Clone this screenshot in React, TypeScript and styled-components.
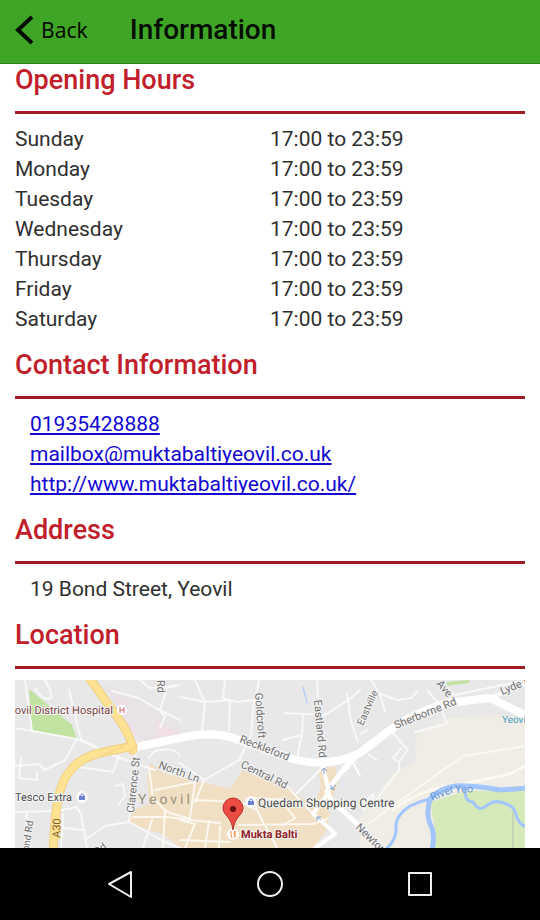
import React from "react";
import styled, { createGlobalStyle } from "styled-components";

const GlobalStyle = createGlobalStyle`
  * { box-sizing: border-box; }
  body {
    margin: 0;
    background: #fff;
    color: #2f2f2f;
    font-family: Roboto, "Liberation Sans", sans-serif;
    font-size: 21px;
    line-height: 30px;
  }
`;

const Screen = styled.div`
  display: flex;
  flex-direction: column;
  height: 100vh;
`;

const TopBar = styled.header`
  display: flex;
  align-items: center;
  flex: none;
  gap: 42px;
  height: 64px;
  padding: 0 15px 4px;
  background: #3fa526;
  border-bottom: 1px solid #2d821b;
  color: #050d03;
`;

const BackButton = styled.button`
  display: flex;
  align-items: center;
  gap: 8px;
  padding: 0;
  border: 0;
  background: none;
  color: inherit;
  font-family: "Noto Sans", sans-serif;
  font-size: 21px;
  line-height: 30px;
  cursor: pointer;
`;

const PageTitle = styled.h1`
  margin: 0;
  font-size: 28px;
  font-weight: 500;
  line-height: 32px;
`;

const Content = styled.main`
  display: flex;
  flex-direction: column;
  flex: 1;
  min-height: 0;
  padding: 0 15px;
  overflow: hidden;
`;

const Section = styled.section<{ $fill?: boolean }>`
  flex: ${(p) => (p.$fill ? "1 0 0" : "none")};
  display: flex;
  flex-direction: column;
  min-height: 0;
`;

const SectionTitle = styled.h2<{ $first?: boolean }>`
  margin: 0 0 10px;
  padding: ${(p) => (p.$first ? "0" : "15px")} 0 15px;
  border-bottom: 3px solid #a01c22;
  color: #c1202b;
  font-size: 27px;
  font-weight: 500;
  line-height: 32px;
`;

const HoursTable = styled.table`
  width: 100%;
  table-layout: fixed;
  border-collapse: collapse;
`;

const DayCell = styled.th`
  padding: 0;
  font-weight: 400;
  text-align: left;
`;

const TimeCell = styled.td`
  padding: 0;
`;

const Details = styled.div`
  display: flex;
  flex-direction: column;
  align-items: flex-start;
  padding: 0 15px;
`;

const ContactLink = styled.a`
  color: #1208d2;
  text-decoration: underline;
  text-decoration-skip-ink: none;
  text-underline-offset: 2px;
`;

const MapFrame = styled.div`
  flex: 1;
  min-height: 0;
  margin-top: 1px;
  background: #e9e9e9;

  svg {
    display: block;
    width: 100%;
    height: 100%;
    font-family: Roboto, sans-serif;
    text-rendering: geometricPrecision;
  }
`;

const SystemBar = styled.nav`
  display: flex;
  flex: none;
  align-items: center;
  justify-content: center;
  gap: 110px;
  height: 72px;
  background: #000;
`;

const SystemButton = styled.button`
  display: flex;
  width: 40px;
  height: 40px;
  padding: 0;
  border: 0;
  background: none;
  cursor: pointer;
`;

const days = ["Sunday", "Monday", "Tuesday", "Wednesday", "Thursday", "Friday", "Saturday"];

const contacts = [
  { label: "01935428888", href: "tel:01935428888" },
  { label: "mailbox@muktabaltiyeovil.co.uk", href: "mailto:mailbox@muktabaltiyeovil.co.uk" },
  { label: "http://www.muktabaltiyeovil.co.uk/", href: "http://www.muktabaltiyeovil.co.uk/" },
];

const minorRoads = [
  "M10 0 L17 51 L62 59 L105 78 L140 90",
  "M0 48 L17 51",
  "M30 0 Q38 14 36 18 Q28 22 20 8",
  "M54 10 L66 60 L80 66",
  "M62 59 L50 80 L30 90 L24 84 L0 86",
  "M6 78 L4 98 L22 100 L22 92",
  "M64 87 L98 92 L104 76",
  "M0 132 L42 131 L62 127 L66 134 L72 168",
  "M48 134 L46 168",
  "M48 148 L68 150",
  "M12 132 L10 168",
  "M97 11 L124 18 L140 28 L165 40",
  "M146 32 L150 36 L145 48",
  "M165 5 L152 8 L145 30",
  "M125 0 L135 8 L160 6",
  "M121 70 L118 100 L114 142 L150 162 L165 168",
  "M100 106 L108 104 L110 116 L104 124",
  "M114 142 L90 146 L70 160",
  "M137 140 L128 168",
  "M134 78 Q140 68 148 70 Q160 68 165 76",
  "M180 0 L190 22 L187 50",
  "M165 17 L190 22 L215 20",
  "M210 0 L208 18 L222 22 L240 20 L244 0",
  "M215 20 L214 50",
  "M239 20 L236 56 L224 80 L189 100 L165 83",
  "M225 80 L270 104 L298 134",
  "M302 0 L303 20 L310 80",
  "M270 33 L310 35 L336 18 L345 10",
  "M288 35 L287 54 L282 78",
  "M286 55 L268 60",
  "M332 14 L336 42 L343 62",
  "M308 87 L282 113",
  "M356 0 L365 14 L370 32",
  "M365 14 L382 20 L396 18 L402 12",
  "M412 10 L425 25 L432 44 L400 52",
  "M354 75 L362 80",
  "M378 53 L393 70 L384 82 L378 78 L386 68",
  "M345 54 L352 50",
  "M384 82 L384 90 L360 122",
  "M345 126 L358 114 L358 118 L348 130",
  "M430 8 L440 15 L492 4 L510 0",
];

const townStreets = [
  "M134 88 L138 118 L152 132 L175 139",
  "M118 137 L152 137 L175 140 L205 143",
  "M140 110 L180 102 L175 138",
  "M180 120 L225 122 L242 130 L250 146",
  "M189 100 L180 122",
  "M194 141 L190 168",
  "M242 130 L239 118 L270 120",
  "M224 145 L298 144 L312 139",
  "M205 146 L204 168",
  "M265 118 L280 138 L268 145",
  "M165 160 L215 162",
  "M165 140 L180 144 L170 168",
  "M150 132 L148 168",
  "M250 145 L262 168",
];

function LocationMap() {
  return (
    <svg viewBox="0 0 510 168" preserveAspectRatio="xMidYMin slice" role="img" aria-label="Map of Yeovil">
      <rect width="510" height="168" fill="#e8e8e8" />
      <path d="M90 4 L125 18 L165 40 L165 56 L125 63 L112 46 Z" fill="#e8e3e7" />
      <path d="M92 4 L101 18 L112 22 L104 24 Z M140 42 L165 52 L142 58 Z M108 36 L120 48 L124 60 L114 48 Z" fill="#f0dfe4" />
      <path d="M14 9 L57 45 L62 59 L17 51 Z" fill="#c2e2a1" />
      <path d="M402 53 L432 38 L480 35 L510 38 V168 H345 V137 L378 93 L400 82 Z" fill="#efede5" />
      <path d="M432 2 L454 0 V3 L432 6 Z" fill="#c2e2a1" />
      <path
        d="M135 83 L150 94 L175 99 L215 109 L228 90 L240 96 L275 108 L298 127 L306 107 L303 90 L310 87 L320 87 L323 103 L316 122 L312 150 L298 168 H165 L150 155 L114 143 L118 130 L135 124 L132 98 Z"
        fill="#f0dfc3"
      />
      <path d="M415 122 L452 111 L485 111 L510 109 V168 H419 L420 150 Z" fill="#d6eab9" />
      <g fill="none" stroke="#fff" strokeLinejoin="round" strokeLinecap="round">
        <g stroke="#f8f8f8" strokeWidth="2">
          {minorRoads.map((d) => (
            <path key={d} d={d} />
          ))}
        </g>
        <g stroke="#fcf8ef" strokeWidth="2">
          {townStreets.map((d) => (
            <path key={d} d={d} />
          ))}
          <path d="M345 150 L375 128 L448 76 L455 75 L510 66" />
          <path d="M378 130 Q410 106 448 104 L495 94 L510 86" strokeWidth="3" />
        </g>
        <path d="M338 77 L312 111 L316 120 L340 142 L350 150" strokeWidth="5" />
        <path d="M308 87 L314 112 L298 134 L312 146 L320 154 L300 168" strokeWidth="4" />
        <path d="M350 66 L330 90" strokeWidth="4" />
        <path d="M338 82 L345 96" strokeWidth="2" />
        <path
          d="M121 67 L165 58 Q195 51 215 57 L275 78 Q312 89 345 73 L375 50 Q400 32 432 23 L475 18 L512 36"
          strokeWidth="8"
        />
        <path d="M475 18 L510 4" strokeWidth="4" />
      </g>
      <g fill="none" strokeLinecap="round" strokeLinejoin="round">
        <g stroke="#f1d083" strokeWidth="9">
          <path d="M73 -4 L95 27 Q115 52 118 70" />
          <path d="M118 66 Q98 70 85 73 Q55 80 46 108 Q40 124 38 174" />
        </g>
        <g stroke="#fde293" strokeWidth="7">
          <path d="M73 -4 L95 27 Q115 52 118 70" />
          <path d="M118 66 Q98 70 85 73 Q55 80 46 108 Q40 124 38 174" />
        </g>
        <path d="M90 74 Q108 70 115 58 M114 74 L122 64" stroke="#f1d083" strokeWidth="1" />
      </g>
      <g fill="none" stroke="#a2c6fb" strokeLinecap="round" strokeLinejoin="round">
        <path d="M370 170 Q382 160 381 147 Q380 136 395 126 Q405 121 415 119" strokeWidth="3" />
        <path d="M415 119 Q425 108 440 106 Q455 105 485 110 L512 108" strokeWidth="5" />
        <path d="M415 119 Q410 136 417 148 Q420 158 417 170" strokeWidth="5" />
        <path d="M450 110 Q450 122 458 122 Q463 131 470 127 Q480 118 491 124 Q500 126 502 138 Q506 146 512 147" strokeWidth="3" />
        <path d="M288 7 L292 23" strokeWidth="1" />
        <path d="M498 132 V168" stroke="#c6d3b2" strokeWidth="2" />
      </g>
      <g fill="none" stroke="#7e9fc9" strokeWidth="1">
        <path d="M309 94 V89 M307 91 L309 88 L312 91 M321 105 L316 109 M316 105 V109 H320 M306 140 L302 137 M302 141 V137 H306" />
      </g>

      <g fill="#717171" stroke="#f4f4f4" strokeWidth="2" paintOrder="stroke" fontSize="11">
        <text transform="translate(142 0) rotate(88)">Rd</text>
        <text transform="translate(119 133) rotate(-84)">Clarence St</text>
        <text transform="translate(143 88) rotate(20)">North Ln</text>
        <text transform="translate(240 13) rotate(86)">Goldcroft</text>
        <text transform="translate(299 20) rotate(85)">Eastland Rd</text>
        <text transform="translate(224 62) rotate(21)">Reckleford</text>
        <text transform="translate(225 87) rotate(26)">Central Rd</text>
        <text transform="translate(348 46) rotate(-66)" fontSize="10">Eastville</text>
        <text transform="translate(381 49) rotate(-22)">Sherborne Rd</text>
        <text transform="translate(421 4) rotate(50)">Ave</text>
        <text transform="translate(487 15) rotate(-22)">Lyde Rd</text>
        <text transform="translate(340 148) rotate(44)">Newton Rd</text>
        <text transform="translate(13 178) rotate(-82)" fontSize="10">Bond Rd</text>
        <text transform="translate(82 176) rotate(-35)">Rd</text>
        <text transform="translate(45 158) rotate(-88)" fill="#80612d" stroke="#fde293">A30</text>
      </g>
      <g fill="#6297d8" fontSize="11">
        <text transform="translate(417 121) rotate(-22)">River</text>
        <text transform="translate(440 113) rotate(-2)">Yeo</text>
      </g>
      <text x="487" y="43" fill="#3d9fc0" fontSize="10">Yeovil</text>
      <text x="123" y="124" fill="#9b917e" fontSize="14" letterSpacing="3">Yeovil</text>
      <g stroke="#f6f6f6" strokeWidth="2" paintOrder="stroke" fontSize="12">
        <text x="98" y="34" textAnchor="end" fill="#784444" fontSize="11">Yeovil District Hospital</text>
        <text x="0" y="121" fill="#4b4b4b" fontSize="11">Tesco Extra</text>
        <text x="243" y="127" fill="#4b4b4b">Quedam Shopping Centre</text>
        <text x="226" y="158" fill="#912023" fontSize="11" fontWeight="700">Mukta Balti</text>
      </g>

      <circle cx="107" cy="30" r="5" fill="#fff" />
      <path d="M105 27 V33 M109 27 V33 M105 30 H109" stroke="#d8676a" fill="none" />
      {[[67, 117], [236, 122]].map(([x, y]) => (
        <g key={x} transform={`translate(${x} ${y})`}>
          <circle r="6" fill="#fbfbfd" />
          <path d="M-3 3 V-1 H3 V3 Z" fill="#6b83d0" />
          <path d="M-2 -1 Q0 -5 2 -1" stroke="#6b83d0" fill="none" />
        </g>
      ))}
      <circle cx="218" cy="154" r="6" fill="#fff" />
      <path d="M216 151 V154 L217 158 M220 158 V151 Q218 154 220 156" stroke="#eb8a3c" fill="none" />
      <path
        d="M218 150 Q217 141 211 135 Q208 132 208 128 A10 10 0 0 1 228 128 Q228 132 225 135 Q219 141 218 150 Z"
        fill="#ea4b43"
        stroke="#b8312c"
      />
      <circle cx="218" cy="129" r="3" fill="#641010" />
    </svg>
  );
}

export default function App() {
  return (
    <Screen>
      <GlobalStyle />
      <TopBar>
        <BackButton type="button">
          <svg width="18" height="30" viewBox="0 0 18 30" fill="none" stroke="currentColor" strokeWidth="4" aria-hidden="true">
            <path d="M17 2 L3 15 L17 28" />
          </svg>
          Back
        </BackButton>
        <PageTitle>Information</PageTitle>
      </TopBar>
      <Content>
        <Section>
          <SectionTitle $first>Opening Hours</SectionTitle>
          <HoursTable>
            <tbody>
              {days.map((day) => (
                <tr key={day}>
                  <DayCell scope="row">{day}</DayCell>
                  <TimeCell>17:00 to 23:59</TimeCell>
                </tr>
              ))}
            </tbody>
          </HoursTable>
        </Section>
        <Section>
          <SectionTitle>Contact Information</SectionTitle>
          <Details>
            {contacts.map((c) => (
              <ContactLink key={c.href} href={c.href}>
                {c.label}
              </ContactLink>
            ))}
          </Details>
        </Section>
        <Section>
          <SectionTitle>Address</SectionTitle>
          <Details>19 Bond Street, Yeovil</Details>
        </Section>
        <Section $fill>
          <SectionTitle>Location</SectionTitle>
          <MapFrame>
            <LocationMap />
          </MapFrame>
        </Section>
      </Content>
      <SystemBar aria-label="System navigation">
        <SystemButton type="button" aria-label="Back">
          <svg width="40" height="40" viewBox="0 0 40 40" fill="none" stroke="#eee" strokeWidth="2" strokeLinejoin="round">
            <path d="M31 8 V33 L9 20 Z" />
          </svg>
        </SystemButton>
        <SystemButton type="button" aria-label="Home">
          <svg width="40" height="40" viewBox="0 0 40 40" fill="none" stroke="#eee" strokeWidth="2">
            <circle cx="20" cy="20" r="12" />
          </svg>
        </SystemButton>
        <SystemButton type="button" aria-label="Recent apps">
          <svg width="40" height="40" viewBox="0 0 40 40" fill="none" stroke="#eee" strokeWidth="2" strokeLinejoin="round">
            <path d="M9 9 H31 V31 H9 Z" />
          </svg>
        </SystemButton>
      </SystemBar>
    </Screen>
  );
}
